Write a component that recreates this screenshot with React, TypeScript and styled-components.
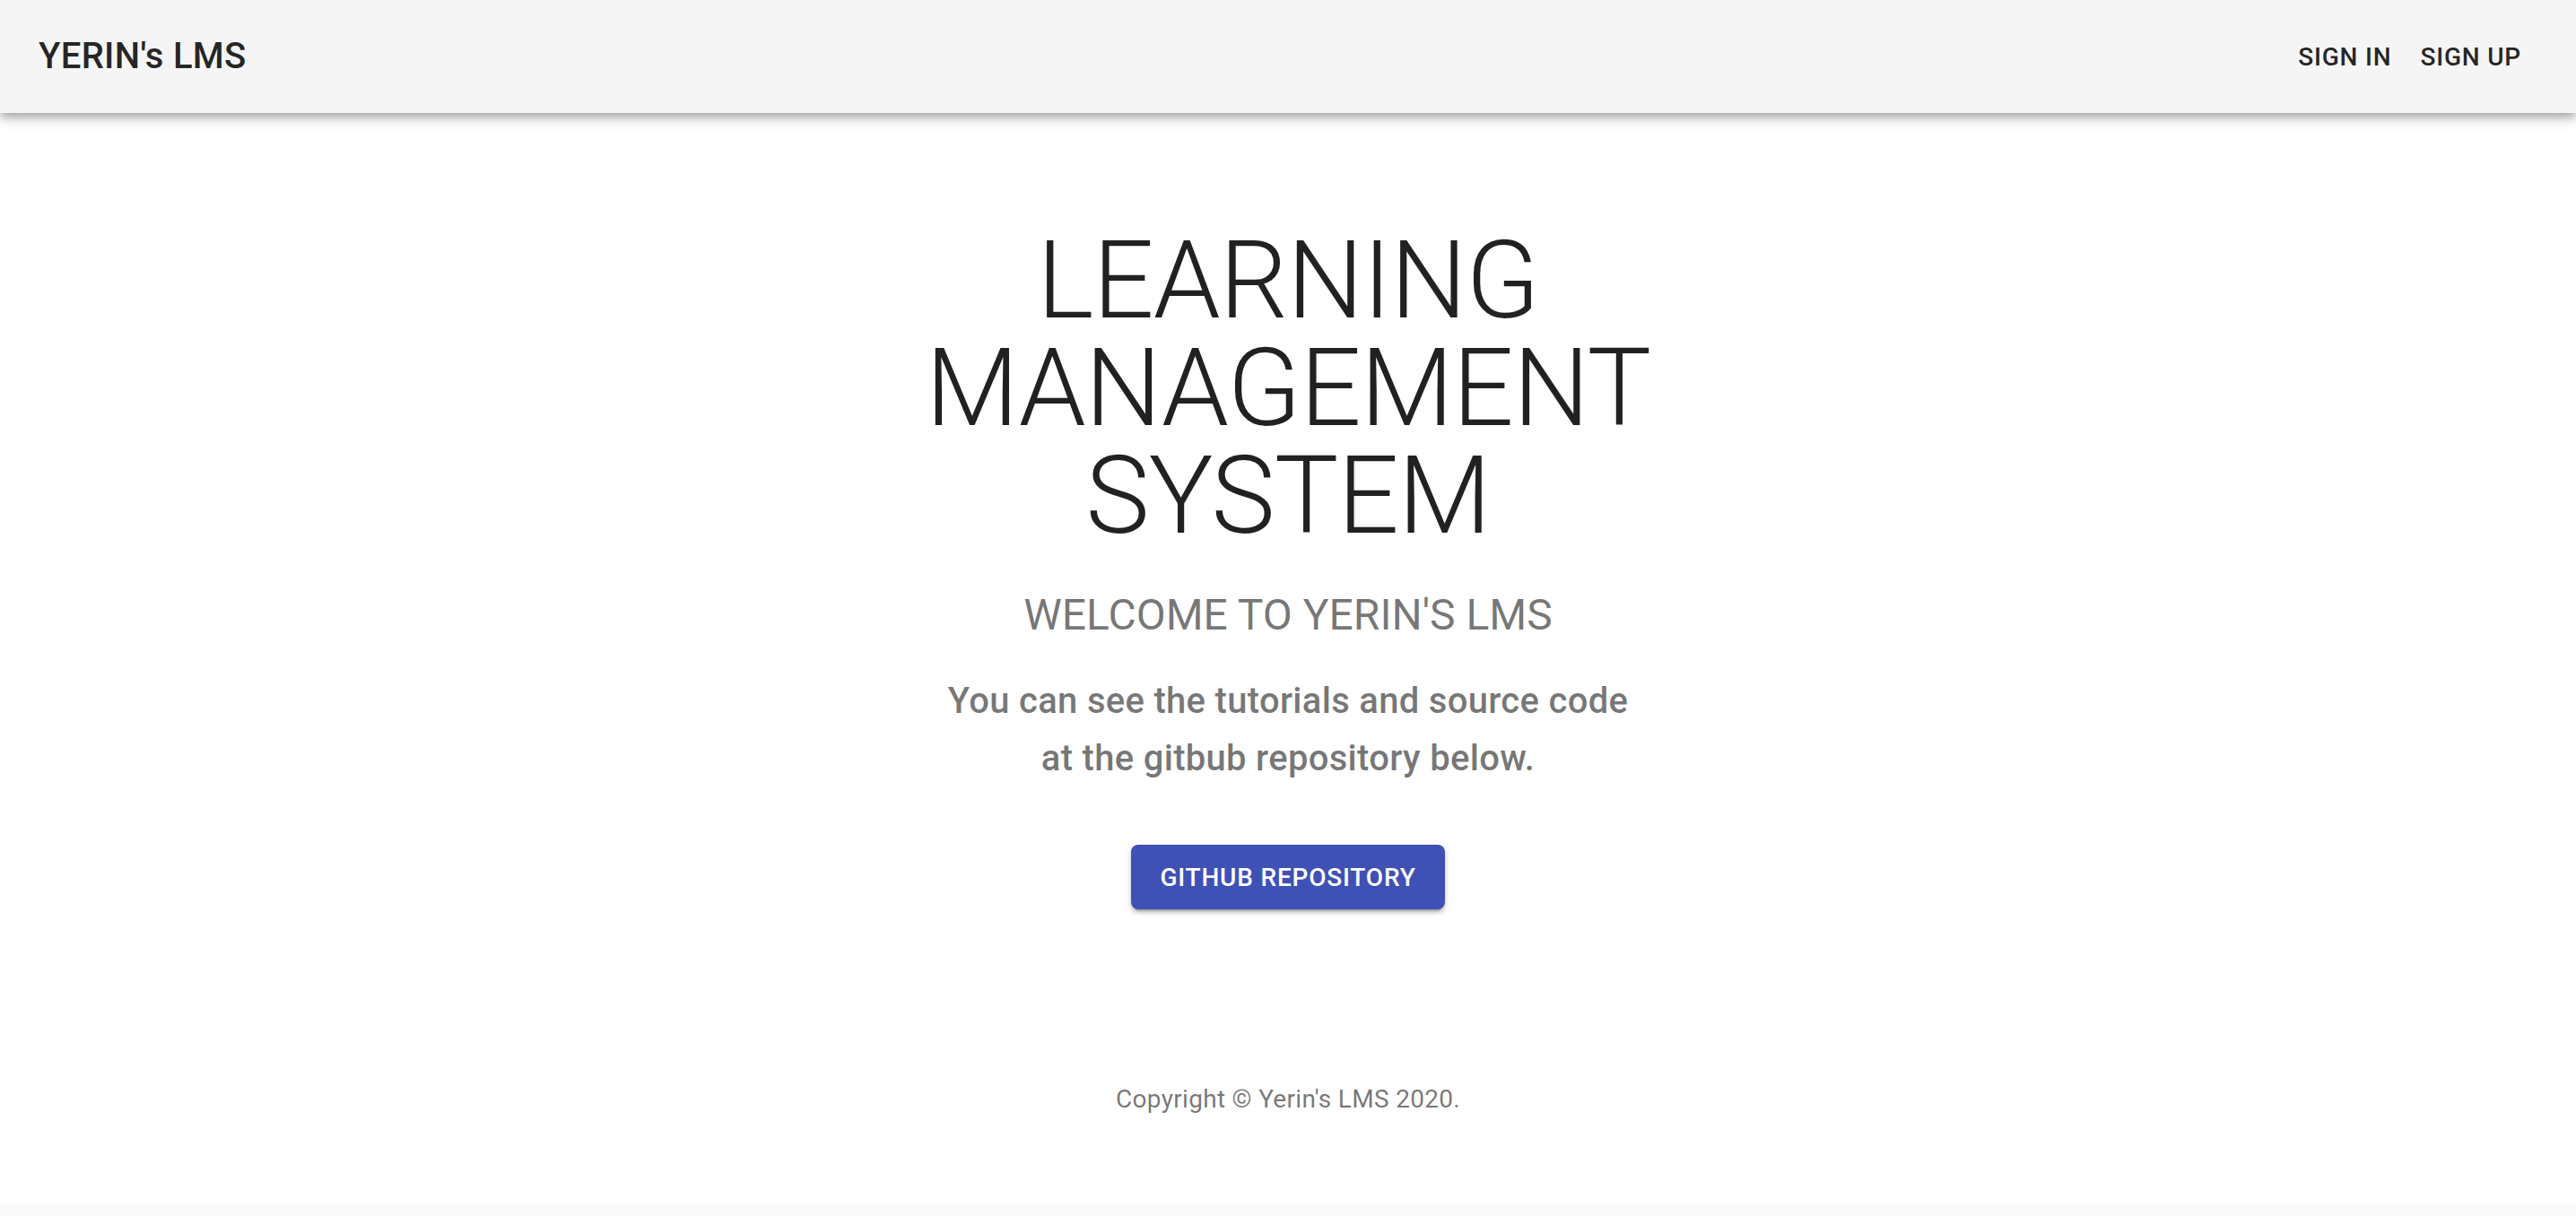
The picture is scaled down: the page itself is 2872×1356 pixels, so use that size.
import React from "react";
import styled, { createGlobalStyle } from "styled-components";

const GlobalStyle = createGlobalStyle`
  html, body {
    margin: 0;
    padding: 0;
    background: #fafafa;
    font-family: Roboto, "Liberation Sans", Arial, sans-serif;
    -webkit-font-smoothing: antialiased;
  }
  * { box-sizing: border-box; }
`;

const AppBar = styled.header`
  position: relative;
  z-index: 2;
  height: 126px;
  background: #f5f5f5;
  color: rgba(0, 0, 0, 0.87);
  box-shadow: 0px 4px 8px -2px rgba(0, 0, 0, 0.2), 0px 8px 10px 0px rgba(0, 0, 0, 0.14),
    0px 2px 20px 0px rgba(0, 0, 0, 0.12);
  display: flex;
  align-items: center;
  justify-content: space-between;
  padding: 0 45px 0 43px;
`;

const Brand = styled.div`
  font-size: 40px;
  font-weight: 500;
  line-height: 1.6;
  letter-spacing: 0.0075em;
  color: rgba(0, 0, 0, 0.87);
`;

const Nav = styled.nav`
  display: flex;
  align-items: center;
`;

const NavButton = styled.button`
  border: 0;
  background: transparent;
  font-family: inherit;
  font-size: 28px;
  font-weight: 500;
  line-height: 1.75;
  letter-spacing: 0.02857em;
  text-transform: uppercase;
  color: rgba(0, 0, 0, 0.87);
  padding: 12px 16px;
  border-radius: 8px;
  cursor: pointer;
`;

const Page = styled.main`
  background: #ffffff;
  display: flex;
  flex-direction: column;
  align-items: center;
  padding: 127px 48px 96px;
`;

const Hero = styled.section`
  display: flex;
  flex-direction: column;
  align-items: center;
  text-align: center;
  width: 1200px;
  max-width: 100%;
`;

const Title = styled.h1`
  margin: 0;
  font-size: 120px;
  font-weight: 300;
  line-height: 120px;
  letter-spacing: -0.00833em;
  color: rgba(0, 0, 0, 0.87);
`;

const Subtitle = styled.h2`
  margin: 41px 0 0;
  font-size: 48px;
  font-weight: 400;
  line-height: 64px;
  letter-spacing: 0;
  color: rgba(0, 0, 0, 0.54);
`;

const Lead = styled.p`
  margin: 32px 0 0;
  font-size: 40px;
  font-weight: 500;
  line-height: 64px;
  letter-spacing: 0.0075em;
  color: rgba(0, 0, 0, 0.54);
`;

const PrimaryButton = styled.a`
  margin-top: 64px;
  display: inline-flex;
  align-items: center;
  justify-content: center;
  height: 72px;
  padding: 0 32px;
  border-radius: 8px;
  background: #3f51b5;
  color: #ffffff;
  font-size: 28px;
  font-weight: 500;
  letter-spacing: 0.02857em;
  text-transform: uppercase;
  text-decoration: none;
  box-shadow: 0px 6px 2px -4px rgba(0, 0, 0, 0.2), 0px 4px 4px 0px rgba(0, 0, 0, 0.14),
    0px 2px 10px 0px rgba(0, 0, 0, 0.12);
`;

const Footer = styled.footer`
  margin-top: 192px;
  font-size: 28px;
  font-weight: 400;
  line-height: 40px;
  letter-spacing: 0.01071em;
  color: rgba(0, 0, 0, 0.54);
  text-align: center;
`;

export default function App() {
  return (
    <>
      <GlobalStyle />
      <AppBar>
        <Brand>YERIN's LMS</Brand>
        <Nav>
          <NavButton>Sign In</NavButton>
          <NavButton>Sign Up</NavButton>
        </Nav>
      </AppBar>
      <Page>
        <Hero>
          <Title>
            LEARNING
            <br />
            MANAGEMENT
            <br />
            SYSTEM
          </Title>
          <Subtitle>WELCOME TO YERIN'S LMS</Subtitle>
          <Lead>
            You can see the tutorials and source code
            <br />
            at the gitbub repository below.
          </Lead>
          <PrimaryButton href="#">Github Repository</PrimaryButton>
        </Hero>
        <Footer>Copyright © Yerin's LMS 2020.</Footer>
      </Page>
    </>
  );
}
